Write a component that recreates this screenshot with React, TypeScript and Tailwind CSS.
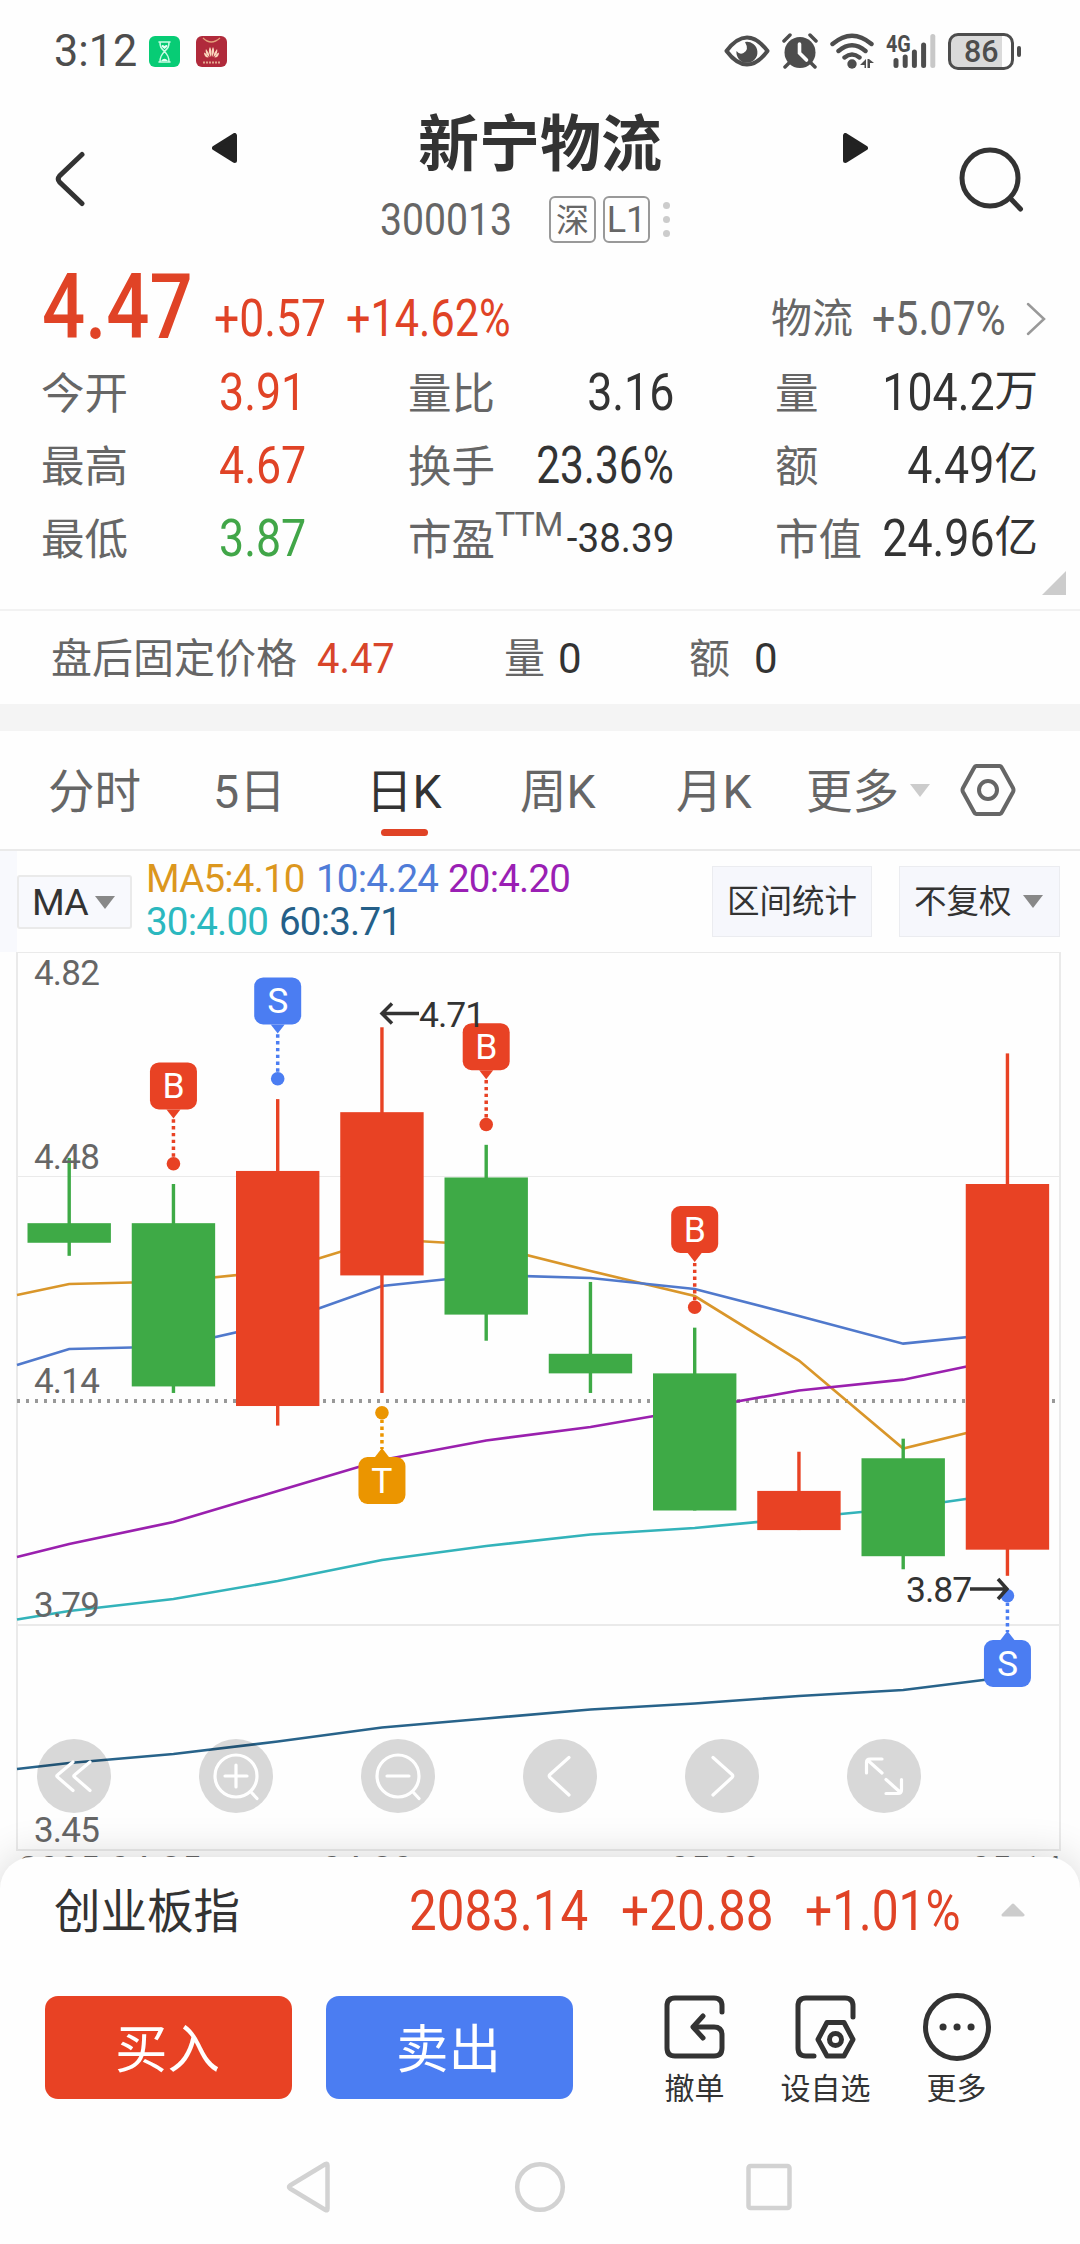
import React from 'react';
import clsx from 'clsx';

interface Candle {
  open: number;
  close: number;
  high: number;
  low: number;
}

interface Mark {
  index: number;
  label: string;
  color: string;
  y: number;
  below?: boolean;
}

const RED = '#e84224';
const GREEN = '#3eaa46';
const BLUE = '#4b7df2';
const ORANGE = '#eb9500';

const candles: Candle[] = [
  { open: 4.41, close: 4.38, high: 4.51, low: 4.36 },
  { open: 4.41, close: 4.16, high: 4.47, low: 4.15 },
  { open: 4.13, close: 4.49, high: 4.6, low: 4.1 },
  { open: 4.33, close: 4.58, high: 4.71, low: 4.15 },
  { open: 4.48, close: 4.27, high: 4.53, low: 4.23 },
  { open: 4.21, close: 4.18, high: 4.32, low: 4.15 },
  { open: 4.18, close: 3.97, high: 4.25, low: 3.97 },
  { open: 3.94, close: 4.0, high: 4.06, low: 3.94 },
  { open: 4.05, close: 3.9, high: 4.08, low: 3.88 },
  { open: 3.91, close: 4.47, high: 4.67, low: 3.87 },
];

// first value is the line's height at the left edge of the chart
const averages = [
  { color: '#d9962a', values: [1295, 1284, 1281.5, 1271, 1239, 1245, 1271, 1296, 1360.5, 1448.5, 1423] },
  { color: '#5079cc', values: [1365, 1349, 1346.5, 1323, 1286, 1275, 1278, 1289, 1316, 1343.7, 1333] },
  { color: '#9a20ae', values: [1557, 1544, 1522, 1491, 1460, 1440.5, 1427, 1409, 1390.5, 1379.7, 1358] },
  { color: '#33b3ba', values: [1619.5, 1611, 1599, 1581, 1560, 1546, 1534.5, 1528, 1518, 1508, 1493] },
  { color: '#28638a', values: [1769, 1763, 1754, 1741.5, 1727.5, 1718.5, 1709.5, 1703.5, 1696, 1690, 1677] },
];

const marks: Mark[] = [
  { index: 1, label: 'B', color: RED, y: 1163.7 },
  { index: 2, label: 'S', color: BLUE, y: 1078.7 },
  { index: 3, label: 'T', color: ORANGE, y: 1412.7, below: true },
  { index: 4, label: 'B', color: RED, y: 1124.5 },
  { index: 6, label: 'B', color: RED, y: 1307.3 },
  { index: 9, label: 'S', color: BLUE, y: 1595.7, below: true },
];

const xAt = (i: number) => 69.2 + i * 104.25;
const yAt = (price: number) => 1184 + (4.47 - price) * 653;

const Num: React.FC<{ children: React.ReactNode; className?: string }> = ({ children, className }) => (
  <span className={clsx('inline-block whitespace-nowrap', className)}>{children}</span>
);

const StatusBar: React.FC = () => (
  <div className="flex h-[98px] items-center pl-[54px] pt-[4px] text-[#4d4d4d]">
    <Num className="w-[95px] origin-left scale-x-[.98] text-[44px]">3:12</Num>
    <svg width="31" height="31" viewBox="0 0 31 31">
      <rect width="31" height="31" rx="6" fill="#07cc75" />
      <path d="M10 6h11M10 26h11M11 6c0 5 1 6 4.500 9.500C12 19 11 21 11 26M20 6c0 5-1 6-4.500 9.500C19 19 20 21 20 26" fill="none" stroke="#c9fbe4" strokeWidth="1.600" strokeLinecap="round" />
      <path d="M15.500 13l-3-2.500q0-2 1.500-1.500l1.500 1 1.500-1q1.500-.500 1.500 1.500zM12 25q3.500-4.500 7 0z" fill="#e6fff4" />
    </svg>
    <svg className="ml-[16px]" width="31" height="31" viewBox="0 0 31 31">
      <rect width="31" height="31" rx="6" fill="#b02a3b" />
      <path d="M7 2q8 8 17 0" fill="none" stroke="#e4a27c" strokeWidth="1.200" />
      <g fill="#fbd8bd">
        <path d="M15 21c-2-3-3-7-1-10q2 3 1 10zM16 21c2-3 3-7 1-10q-2 3-1 10z" />
        <path d="M13.500 21c-3-2-4.500-5-3.500-8q3 3 3.500 8zM17.500 21c3-2 4.500-5 3.500-8q-3 3-3.500 8z" />
        <path d="M12.500 21.500c-3 0-4.500-2-4.500-5q3 1 4.500 5zM18.500 21.500c3 0 4.500-2 4.500-5q-3 1-4.500 5z" />
      </g>
      <path d="M7 26.500h17" stroke="#e3a58d" strokeWidth="2" strokeDasharray="2 1" />
    </svg>
    <svg className="ml-[497px]" width="46" height="32" viewBox="0 0 46 32">
      <path d="M2.500 16C10 6 16 2.500 23 2.500S36 6 43.500 16C36 26 30 29.500 23 29.500S10 26 2.500 16z" fill="none" stroke="currentColor" strokeWidth="4" strokeLinejoin="round" />
      <path d="M21 7a10.500 10.500 0 1 1-8.500 9q3 4 7 2 6-3 1.500-11z" fill="currentColor" />
    </svg>
    <svg className="ml-[12px]" width="36" height="36" viewBox="0 0 36 36">
      <circle cx="18" cy="19.500" r="15.500" fill="currentColor" />
      <path d="M2 8l6-6M34 8l-6-6M7 30l-4 4M29 30l4 4" stroke="currentColor" strokeWidth="3.500" strokeLinecap="round" />
      <path d="M17.500 11v9l7 7" fill="none" stroke="#fefefe" strokeWidth="3.600" strokeLinecap="round" />
    </svg>
    <svg className="ml-[12px]" width="45" height="36" viewBox="0 0 45 36">
      <path d="M2.500 11Q22 -5.500 41.500 11M8.500 18Q22 6.500 35.500 18M14.500 24.500Q22 18.500 29.500 24.500" fill="none" stroke="currentColor" strokeWidth="4.400" strokeLinecap="round" />
      <circle cx="22" cy="31" r="4.700" fill="currentColor" />
      <path d="M36 26v9h-1.500v-3h-4.500zM37.500 26h1.500l5 4h-4v5h-2.500z" fill="currentColor" />
    </svg>
    <div className="relative ml-[11px] h-[36px] w-[52px]">
      <span className="absolute left-0 top-0 origin-left scale-x-[.86] text-[23px] font-bold">4G</span>
      <svg className="absolute left-[7px] top-[1px]" width="44" height="34" viewBox="0 0 44 34">
        <path d="M3 26.500v5M12.200 23v8.500M21.400 18v13.500M30.600 11v20.500" stroke="currentColor" strokeWidth="5" strokeLinecap="round" />
        <path d="M39.800 2.500v29" stroke="#c8c8c8" strokeWidth="5" strokeLinecap="round" />
      </svg>
    </div>
    <div className="ml-[10px] flex h-[37px] w-[66px] items-center justify-center rounded-[10px] border-[3px] border-[#4d4d4d] bg-linear-to-r from-[#dadada] from-85% to-[#fefefe] to-85%">
      <Num className="scale-x-[.95] text-[32px] font-medium">86</Num>
    </div>
    <div className="ml-[3px] h-[11px] w-[4px] rounded-full bg-[#4d4d4d]" />
  </div>
);

const Header: React.FC = () => (
  <div className="flex h-[153px]">
    <div className="w-[212px] pl-[54px] pt-[53px]">
      <svg width="32" height="56" viewBox="0 0 32 56">
        <path d="M28 3.500L5.500 25Q3 28 5.500 31L28 52.500" fill="none" stroke="#333" strokeWidth="5" strokeLinecap="round" />
      </svg>
    </div>
    <div className="w-[656px]">
      <div className="flex h-[90px] items-center justify-between">
        <svg className="mt-[10px]" width="25" height="30" viewBox="0 0 25 30">
          <path d="M22.500 2.500v25L2.500 15z" fill="#222" stroke="#222" strokeWidth="5" strokeLinejoin="round" />
        </svg>
        <h1 className="pt-[5px] text-[61px] font-bold text-[#333]">新宁物流</h1>
        <svg className="mt-[10px]" width="25" height="30" viewBox="0 0 25 30">
          <path d="M2.500 2.500v25l20-12.500z" fill="#222" stroke="#222" strokeWidth="5" strokeLinejoin="round" />
        </svg>
      </div>
      <div className="flex h-[63px] items-center pl-[168px] text-[#666]">
        <Num className="w-[169px] origin-left scale-x-[.87] text-[45px]">300013</Num>
        <span className="flex size-[47px] items-center justify-center rounded-[6px] border-2 border-[#999] pt-[1px] text-[33px]">深</span>
        <span className="ml-[7px] flex size-[47px] items-center justify-center rounded-[6px] border-2 border-[#999] text-[36px]">L1</span>
        <div className="ml-[13px] flex flex-col gap-[7px]">
          <i className="size-[7px] rounded-full bg-[#ccc]" />
          <i className="size-[7px] rounded-full bg-[#ccc]" />
          <i className="size-[7px] rounded-full bg-[#ccc]" />
        </div>
      </div>
    </div>
    <div className="pl-[91px] pt-[49px]">
      <svg width="66" height="68" viewBox="0 0 66 68">
        <g fill="none" stroke="#333" strokeWidth="5" strokeLinecap="round">
          <circle cx="31" cy="31" r="28" />
          <path d="M51 51l10.500 11" />
        </g>
      </svg>
    </div>
  </div>
);

const quoteRows = [
  { a: '今开', av: '3.91', up: true, b: '量比', bv: '3.16', c: '量', cv: '104.2', unit: '万' },
  { a: '最高', av: '4.67', up: true, b: '换手', bv: '23.36%', c: '额', cv: '4.49', unit: '亿' },
  { a: '最低', av: '3.87', up: false, b: '市盈', bv: '-38.39', c: '市值', cv: '24.96', unit: '亿' },
];

const middleValueStyles = [
  'scale-x-[.86] pt-[2px] text-[52px]',
  '-ml-[20px] scale-x-[.815] pt-[2px] text-[52px]',
  'scale-x-[.94] pt-[2px] text-[41px]',
];

const Quote: React.FC = () => (
  <div className="relative h-[360px] border-b-2 border-[#f2f2f2] pt-[10px]">
    <div className="flex h-[94px] items-baseline text-[#e04326]">
      <Num className="ml-[42px] w-[172px] origin-left translate-y-[2px] scale-x-[.845] text-[90px] font-medium">4.47</Num>
      <Num className="w-[132px] origin-left scale-x-[.855] text-[52px]">+0.57</Num>
      <Num className="w-[425px] origin-left scale-x-[.83] text-[52px]">+14.62%</Num>
      <span className="w-[101px] -translate-y-[3px] text-[41px] text-[#666]">物流</span>
      <Num className="w-[153px] origin-left -translate-y-[1px] scale-x-[.84] text-[49px] text-[#666]">+5.07%</Num>
      <svg width="22" height="34" viewBox="0 0 22 34">
        <path d="M3 2l16 15L3 32" fill="none" stroke="#999" strokeWidth="2.500" strokeLinecap="round" />
      </svg>
    </div>
    {quoteRows.map((row, i) => (
      <div key={row.a} className="flex h-[73px] items-center pl-[41px] text-[43.500px] text-[#666]">
        <span className="w-[178px] pt-[7px]">{row.a}</span>
        <Num className={clsx('w-[189px] origin-left scale-x-[.86] pt-[2px] text-[52px]', row.up ? 'text-[#e04326]' : 'text-[#41a648]')}>{row.av}</Num>
        <div className="flex w-[266px] items-center justify-between">
          <span className="shrink-0 pt-[7px]">{row.b}</span>
          {row.b === '市盈' && <sup className="top-[-14px] mr-auto w-[50px] text-[34px] tracking-[-1px]">TTM</sup>}
          <Num className={clsx('origin-right text-[#333]', middleValueStyles[i])}>{row.bv}</Num>
        </div>
        <div className="ml-[101px] flex w-[263px] items-center justify-between">
          <span className="whitespace-nowrap pt-[7px]">{row.c}</span>
          <div className="flex items-center text-[#333]">
            <Num className="-ml-[30px] origin-right scale-x-[.86] pt-[2px] text-[52px]">{row.cv}</Num>
            <span>{row.unit}</span>
          </div>
        </div>
      </div>
    ))}
    <svg className="absolute left-[1041px] top-[319px]" width="25" height="25" viewBox="0 0 25 25">
      <path d="M1 25L25 1v24z" fill="#ccc" />
    </svg>
  </div>
);

const AfterHours: React.FC = () => (
  <div className="flex h-[93px] items-center pl-[51px] text-[41px] text-[#666]">
    <span className="w-[266px] pt-[3px]">盘后固定价格</span>
    <Num className="w-[187px] origin-left scale-x-[.95] pt-[2px] text-[42px] text-[#d8452a]">4.47</Num>
    <span className="w-[54px] pt-[3px]">量</span>
    <span className="w-[131px] pt-[2px] text-[42px] text-[#333]">0</span>
    <span className="w-[65px] pt-[3px]">额</span>
    <span className="pt-[2px] text-[42px] text-[#333]">0</span>
  </div>
);

const tabs = ['分时', '5日', '日K', '周K', '月K', '更多'];

const Tabs: React.FC = () => (
  <div className="border-b-2 border-[#eaeaea]">
    <div className="grid h-[118px] grid-cols-[165px_153px_154px_156px_130px_104px_50px_60px] items-center pl-[48px] text-[46.500px] text-[#666]">
      {tabs.map((tab) => (
        <div key={tab} className={clsx('relative whitespace-nowrap pt-[5px]', tab === '日K' && 'text-[#333]')}>
          {tab}
          {tab === '日K' && <i className="absolute -bottom-[20px] left-[15px] h-[7px] w-[47px] rounded-full bg-[#e04326]" />}
        </div>
      ))}
      <svg width="20" height="13" viewBox="0 0 20 13">
        <path d="M0 0h20L10 13z" fill="#ccc" />
      </svg>
      <svg width="56" height="54" viewBox="0 0 56 54" className="mb-[1px]">
        <g fill="none" stroke="#666" strokeWidth="4" strokeLinejoin="round">
          <path d="M16 3h24q1 0 2 2l11 20q1 2 0 4L42 49q-1 2-2 2H16q-1 0-2-2L3 29q-1-2 0-4L14 5q1-2 2-2z" />
          <circle cx="28" cy="27" r="9" />
        </g>
      </svg>
    </div>
  </div>
);

const Caret: React.FC = () => (
  <svg width="20" height="13" viewBox="0 0 20 13">
    <path d="M0 0h20L10 13z" fill="#888" />
  </svg>
);

const MaBar: React.FC = () => (
  <div className="flex h-[101px] text-[#333]">
    <div className="w-[17px] bg-[#f8f9fd]" />
    <div className="mt-[24px] flex h-[54px] w-[115px] items-center gap-[7px] rounded-[3px] border-2 border-[#eaeaea] bg-[#f8f9fd] pl-[13px]">
      <span className="w-[56px] pt-[2px] text-[37.500px] tracking-[-0.8px]">MA</span>
      <Caret />
    </div>
    <div className="w-[580px] pl-[14px] pt-[7px] text-[38.500px] tracking-[-0.8px]">
      <div className="flex h-[43px] items-center">
        <span className="w-[170px] text-[#dc971e]">MA5:4.10</span>
        <span className="w-[132px] text-[#4f7cd8]">10:4.24</span>
        <span className="text-[#9a1fb4]">20:4.20</span>
      </div>
      <div className="flex h-[42px] items-center">
        <span className="w-[133px] text-[#2bb8bf]">30:4.00</span>
        <span className="text-[#245f88]">60:3.71</span>
      </div>
    </div>
    <div className="mt-[15px] flex h-[71px] w-[160px] items-center justify-center border border-[#ebecf0] bg-[#f6f7fc] pt-[2px] text-[32.500px]">区间统计</div>
    <div className="ml-[27px] mt-[15px] flex h-[71px] w-[161px] items-center gap-[11px] border border-[#ebecf0] bg-[#f6f7fc] pl-[14px] text-[32.500px]">
      <span className="pt-[2px]">不复权</span>
      <Caret />
    </div>
  </div>
);

const MarkBadge: React.FC<{ mark: Mark }> = ({ mark }) => {
  const x = xAt(mark.index);
  const dir = mark.below ? 1 : -1;
  const top = mark.below ? mark.y + 44.300 : mark.y - 101.300;
  const edge = mark.below ? top : top + 47;
  return (
    <g fill={mark.color}>
      <path d={`M${x} ${mark.y + 7 * dir}V${edge - 8 * dir}`} stroke={mark.color} strokeWidth="3.500" strokeDasharray="3.400 3.400" />
      <circle cx={x} cy={mark.y} r="6.800" />
      <rect x={x - 23.500} y={top} width="47" height="47" rx="9" />
      <path d={`M${x - 7} ${edge}L${x} ${edge - 9 * dir}L${x + 7} ${edge}z`} />
      <text x={x} y={top + 36} fill="#fff" fontSize="35.500" textAnchor="middle">{mark.label}</text>
    </g>
  );
};

const controlIcons = [
  'M36 23L20.500 36Q19 37 20.500 38L36 51.500M53 23L37.500 36Q36 37 37.500 38L53 51.500',
  'M58 37a21 21 0 1 1-42 0 21 21 0 1 1 42 0M52 53l6 6.500M26 37h22M37 26v22',
  'M58 37a21 21 0 1 1-42 0 21 21 0 1 1 42 0M52 53l6 6.500M26 37h22',
  'M46 18.500L27 35.500Q25.500 37 27 38.500L46 56',
  'M28 18.500L47 35.500Q48.500 37 47 38.500L28 56',
  'M35 20H23q-3.500 0-3.500 3.500V34M21 21.500L35 34M39 54.500h12q3.500 0 3.500-3.500V40.500M53 53L39 40.500',
];

const Chart: React.FC = () => (
  <div className="relative h-[945px]">
    <svg className="block" width="1080" height="945" viewBox="0 952 1080 945" fontFamily="Roboto, sans-serif">
      <g fill="#eaeaea">
        <rect x="16" y="952" width="1045" height="1" />
        <rect x="16" y="952" width="2" height="899" />
        <rect x="1059" y="952" width="2" height="899" />
        <rect x="17" y="1176" width="1043" height="1" />
        <rect x="17" y="1624" width="1043" height="2" />
        <rect x="16" y="1849" width="1045" height="2" />
      </g>
      <path d="M17 1401h1043" stroke="#999" strokeWidth="4" strokeDasharray="3 6" />
      <g fill="none" strokeWidth="2.700">
        {averages.map(({ color, values }) => (
          <polyline key={color} stroke={color} points={values.map((v, i) => `${i === 0 ? 17 : xAt(i - 1)},${v}`).join(' ')} />
        ))}
      </g>
      {candles.map((c, i) => {
        const color = c.close >= c.open ? RED : GREEN;
        const top = yAt(Math.max(c.open, c.close));
        const bottom = yAt(Math.min(c.open, c.close));
        return (
          <g key={i} fill={color}>
            <rect x={xAt(i) - 1.700} y={yAt(c.high)} width="3.400" height={yAt(c.low) - yAt(c.high)} />
            <rect x={xAt(i) - 41.700} y={top} width="83.400" height={bottom - top} />
          </g>
        );
      })}
      <g fill="#666" fontSize="35" letterSpacing="-0.800">
        <text x="34" y="985">4.82</text>
        <text x="34" y="1169">4.48</text>
        <text x="34" y="1392.500">4.14</text>
        <text x="34" y="1617">3.79</text>
        <text x="34" y="1841.500">3.45</text>
        <text x="19" y="1881" letterSpacing="0.600">2025-04-25</text>
        <text x="322" y="1881" letterSpacing="0.600">04-30</text>
        <text x="670" y="1881" letterSpacing="0.600">05-08</text>
        <text x="971" y="1881" letterSpacing="0.600">05-14</text>
      </g>
      {marks.map((mark) => (
        <MarkBadge key={mark.index} mark={mark} />
      ))}
      <g fill="none" stroke="#333" strokeWidth="3.500">
        <path d="M419 1013.500H382M392 1003.500L382 1013.500L392 1023.500" />
        <path d="M970 1589H1006M998 1579L1007 1589L998 1599" />
      </g>
      <g fill="#333" fontSize="35.500" letterSpacing="-1">
        <text x="419" y="1026.500">4.71</text>
        <text x="906" y="1602">3.87</text>
      </g>
    </svg>
    <div className="absolute left-[37px] top-[787px] flex gap-[88px]">
      {controlIcons.map((d) => (
        <svg key={d} width="74" height="74" viewBox="0 0 74 74">
          <circle cx="37" cy="37" r="37" fill="#000" fillOpacity=".15" />
          <path d={d} fill="none" stroke="#fff" strokeWidth="3.200" strokeLinecap="round" />
        </svg>
      ))}
    </div>
  </div>
);

const actions = [
  {
    label: '撤单',
    icon: (
      <>
        <path d="M62 19v-6q0-8-8-8H15q-8 0-8 8v42q0 8 8 8h39q8 0 8-8V42q0-8-8-8H36" />
        <path d="M43 23L33 34l10 11" />
      </>
    ),
  },
  {
    label: '设自选',
    icon: (
      <>
        <path d="M62 24V13q0-8-8-8H15q-8 0-8 8v42q0 8 8 8h8" />
        <path d="M36 29.500h17L62 46.500l-9 16.500H36L27 46.500z" />
        <circle cx="44.500" cy="46.500" r="6" />
      </>
    ),
  },
  {
    label: '更多',
    icon: (
      <>
        <circle cx="35" cy="34" r="31.500" />
        <path d="M21 34h.1M35 34h.1M49 34h.1" strokeWidth="7" />
      </>
    ),
  },
];

const BottomSheet: React.FC = () => (
  <div className="relative -mt-[40px] h-[387px] rounded-t-[32px] bg-[#fefefe] shadow-[0_0_42px_rgba(0,0,0,0.16)]">
    <div className="flex h-[106px] items-center pl-[54px] text-[#e04326]">
      <span className="w-[355px] pt-[4px] text-[46.500px] text-[#333]">创业板指</span>
      <Num className="w-[212px] origin-left scale-x-[.88] pt-[2px] text-[56px]">2083.14</Num>
      <Num className="w-[184px] origin-left scale-x-[.885] pt-[2px] text-[56px]">+20.88</Num>
      <Num className="w-[196px] origin-left scale-x-[.855] pt-[2px] text-[56px]">+1.01%</Num>
      <svg width="24" height="14" viewBox="0 0 24 14">
        <path d="M2 12L12 2l10 10z" fill="#ccc" stroke="#ccc" strokeWidth="3" strokeLinejoin="round" />
      </svg>
    </div>
    <div className="flex pl-[45px] pt-[33px]">
      <button className="h-[103px] w-[247px] rounded-[13px] bg-[#e84224] pr-[2px] pt-[6px] text-[52.500px] text-white">买入</button>
      <button className="ml-[34px] h-[103px] w-[247px] rounded-[13px] bg-[#4b7df2] pr-[2px] pt-[6px] text-[52.500px] text-white">卖出</button>
      <div className="-mt-[3px] ml-[56px] flex">
        {actions.map(({ label, icon }) => (
          <div key={label} className="flex w-[131px] flex-col items-center text-[30px] text-[#333]">
            <svg width="70" height="68" viewBox="0 0 70 68" fill="none" stroke="#333" strokeWidth="5" strokeLinecap="round" strokeLinejoin="round">
              {icon}
            </svg>
            <span className="mt-[13px]">{label}</span>
          </div>
        ))}
      </div>
    </div>
    <svg className="absolute left-[284px] top-[302px]" width="512" height="56" viewBox="0 0 512 56" fill="none" stroke="#d2d2d2" strokeWidth="4.500" strokeLinejoin="round">
      <path d="M41.500 5q2-1 2 1.500v43q0 2.500-2 1.500L6 29.500q-2-1.500 0-3z" />
      <circle cx="256" cy="28" r="22.800" />
      <rect x="464.500" y="7" width="41" height="42" rx="2" />
    </svg>
  </div>
);

const App: React.FC = () => (
  <div className="h-[2244px] w-[1080px] overflow-hidden bg-[#fefefe] font-[Roboto,'Noto_Sans_CJK_SC',sans-serif] leading-none">
    <StatusBar />
    <Header />
    <Quote />
    <AfterHours />
    <div className="h-[27px] bg-[#f4f4f4]" />
    <Tabs />
    <MaBar />
    <Chart />
    <BottomSheet />
  </div>
);

export default App;
